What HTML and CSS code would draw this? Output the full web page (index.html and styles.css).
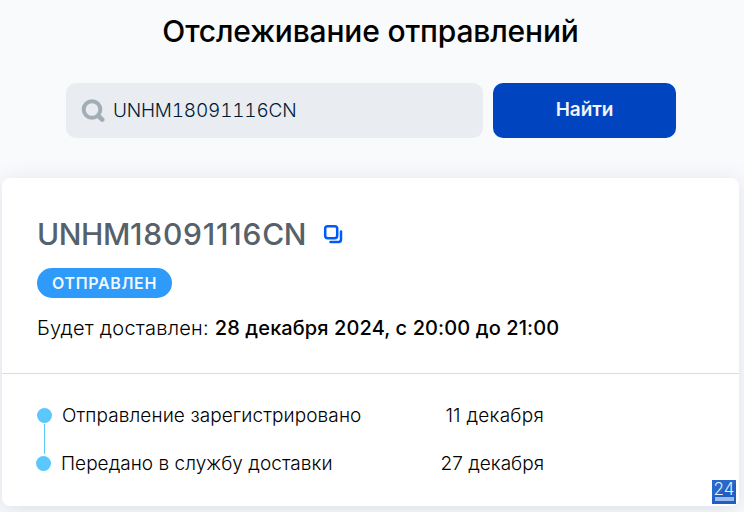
FILE: index.html
```html
<!DOCTYPE html>
<html lang="ru">
<head>
<meta charset="utf-8">
<title>Отслеживание отправлений</title>
<link rel="stylesheet" href="styles.css">
</head>
<body>
<main class="page">
  <h1 class="title"><span>Отслеживание отправлений</span></h1>
  <form class="search">
    <div class="field">
      <svg class="search-icon" width="24" height="24" viewBox="0 0 24 24" fill="none" stroke="#a3adb5"><circle cx="11" cy="10.5" r="8.3" stroke-width="4"/><path d="M17.5 17l3.7 3.7" stroke-width="4.6" stroke-linecap="round"/></svg>
      <span class="query">UNHM18091116CN</span>
    </div>
    <button class="submit" type="button"><span>Найти</span></button>
  </form>
  <section class="card">
    <div class="summary">
      <div class="heading">
        <h2 class="number">UNHM<span class="digits">18091116</span>CN</h2>
        <svg class="copy" width="20" height="20" viewBox="0 0 20 20" fill="none" stroke="#005bff" stroke-width="2.5" stroke-linecap="round" stroke-linejoin="round"><rect x="2.2" y="2.2" width="12" height="12" rx="2.4"/><path d="M18 7.5V15.5a2.4 2.4 0 0 1-2.4 2.4H7.5"/></svg>
      </div>
      <div class="badge"><span>ОТПРАВЛЕН</span></div>
      <p class="delivery"><span class="label">Будет доставлен: </span><b>28 декабря 2024, с 20:00 до 21:00</b></p>
    </div>
    <ul class="timeline">
      <li class="event first"><i class="dot"></i><span class="name">Отправление зарегистрировано</span><span class="date">11 декабря</span></li>
      <li class="link"></li>
      <li class="event second"><i class="dot"></i><span class="name">Передано в службу доставки</span><span class="date">27 декабря</span></li>
    </ul>
    <svg class="mark" width="24" height="24" viewBox="0 0 24 24"><rect width="24" height="24" fill="#1e5ec5"/><path d="M0 0H24V3Q12 9 0 18Z" fill="#2868cb"/><text x="12" y="15" text-anchor="middle" class="mark-text">24</text><rect x="3" y="17" width="19" height="4" fill="#9bbbe8"/></svg>
  </section>
</main>
</body>
</html>
```

FILE: styles.css
```css
* { box-sizing: border-box; }
body { margin: 0; width: 744px; height: 512px; overflow: hidden; background: #f9fafc; font-family: Inter, "Liberation Sans", sans-serif; color: #000; }
.page { height: 512px; overflow: hidden; }
.title { margin: 0; height: 83px; padding: 11px 3px 0 0; font-size: 30px; line-height: 40px; font-weight: 500; letter-spacing: -.17px; text-align: center; }
.search { display: flex; gap: 10px; margin: 0 0 40px 66px; height: 55px; }
.field { display: flex; align-items: center; width: 417px; padding-left: 15px; border-radius: 10px; background: #e9ecf1; }
.search-icon { flex: none; }
.query { margin-left: 8px; font-size: 19px; font-weight: 300; letter-spacing: -.2px; font-variant-numeric: tabular-nums; color: #001a34; }
.submit { width: 183px; padding: 0 0 2px; border: 0; border-radius: 10px; background: #0044bf; color: #f0f5ff; font: 600 19px Inter, sans-serif; letter-spacing: -.1px; }
.card { position: relative; width: 737px; height: 328px; margin-left: 2px; border-radius: 8px; background: #fff; box-shadow: 0 4px 24px rgba(0, 50, 90, .13); }
.summary { height: 196px; padding: 36px 35px 0; border-bottom: 1px solid #d5dde6; }
.heading { display: flex; align-items: center; height: 40px; }
.number { margin: 0; width: 269px; font-size: 30px; font-weight: 500; line-height: 40px; letter-spacing: -.4px; color: #56616b; }
.digits { letter-spacing: .8px; }
.copy { margin-left: 17px; }
.badge { display: flex; align-items: center; justify-content: center; width: 135px; height: 30px; margin-top: 14px; border-radius: 15px; background: #2e9af9; color: #f2f8ff; font-size: 16px; font-weight: 600; letter-spacing: .65px; }
.delivery { margin: 17px 0 0; font-size: 20px; line-height: 27px; font-weight: 300; white-space: pre; }
.label { letter-spacing: .25px; }
.delivery b { font-weight: 500; letter-spacing: .1px; }
.timeline { margin: 0; padding: 29px 0 0 34px; list-style: none; font-size: 19px; line-height: 24px; font-weight: 300; }
.event { display: flex; align-items: center; width: 508px; height: 24px; }
.name, .date { position: relative; top: 1px; }
.dot { width: 15px; height: 15px; margin-right: 10px; border-radius: 50%; background: #5bc8fb; }
.first .dot { margin-left: 1px; }
.first .name { letter-spacing: .1px; }
.first .date { letter-spacing: .25px; }
.second .name { letter-spacing: .03px; }
.link { width: 1px; height: 24px; margin-left: 8px; background: #5bc8fb; box-shadow: 0 -3px #5bc8fb, 0 3px #5bc8fb; }
.date { margin-left: auto; }
.mark { position: absolute; left: 710px; top: 302px; }
.mark-text { font: 300 17px Inter, sans-serif; fill: #e4efff; }
```
